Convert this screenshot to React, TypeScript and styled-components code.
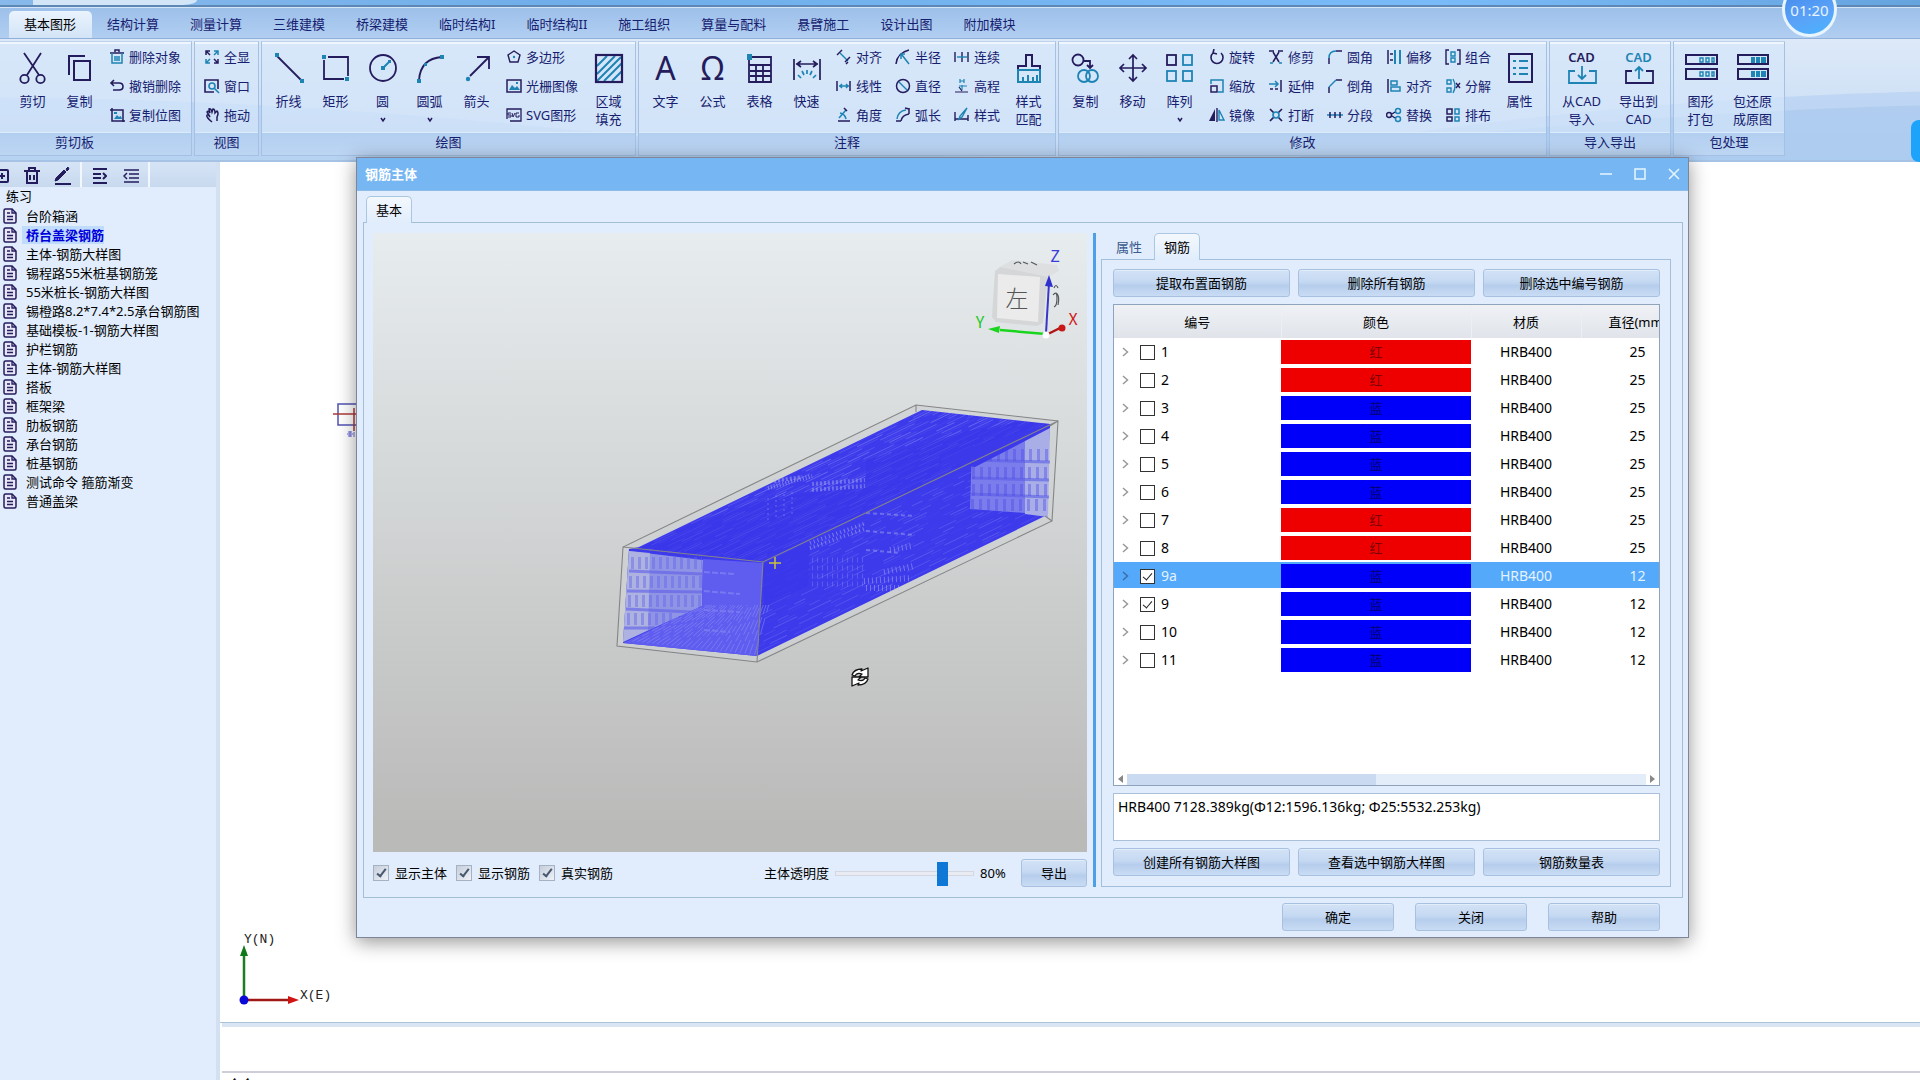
import React, { useState } from "react";
import styled, { createGlobalStyle, css } from "styled-components";

const NAVY = "#241c5c";
const TEAL = "#1d84b4";
const INK = "#16206e";
const SANS = `"Noto Sans", "Noto Sans CJK SC", sans-serif`;

const GlobalStyle = createGlobalStyle`
  *, *::before, *::after { box-sizing: border-box; }
  html, body { margin: 0; height: 100%; }
  body { font-family: ${SANS}; font-size: 13px; line-height: 18px; color: #000; overflow: hidden; }
  #root { height: 100%; }
  button, input, textarea { font: inherit; color: inherit; }
`;

/* ---------- icons ---------- */

const n = { stroke: NAVY, fill: "none" };
const t = { stroke: TEAL, fill: "none" };

const bigIcons: Record<string, React.ReactNode> = {
  cut: (
    <g strokeWidth="1.8">
      <path {...n} d="M5 -1 20 21M22 -1 8 21" />
      <circle {...n} cx="5.5" cy="25" r="4.2" />
      <circle {...n} cx="21.5" cy="25" r="4.2" />
    </g>
  ),
  copy: (
    <g strokeWidth="2">
      <path {...n} d="M3 21V2H19" />
      <rect {...n} x="8" y="7" width="16" height="19" />
    </g>
  ),
  line: (
    <g strokeWidth="1.8">
      <path {...n} d="M2 2 26 26" />
      <path fill={TEAL} d="M0 -1h4v4H0zM25 25h4v4h-4z" />
    </g>
  ),
  rect: (
    <g strokeWidth="1.8">
      <path {...n} d="M6 3H26V22M2 6V25H22" />
      <path fill={TEAL} d="M0 1h4v4H0zM23 23h4v4h-4z" />
    </g>
  ),
  circle: (
    <g strokeWidth="1.8">
      <circle {...n} cx="14" cy="14" r="13" />
      <path {...t} d="M14 14 21 7" strokeWidth="2" />
      <path fill={TEAL} d="M12 12h4v4h-4zM19 6h3v3h-3z" />
    </g>
  ),
  arc: (
    <g strokeWidth="1.8">
      <path {...n} d="M3 26C4 12 12 4 26 3" />
      <path fill={TEAL} d="M1 25h4v4H1zM24 1h4v4h-4zM8 9h3v3H8z" />
    </g>
  ),
  arrow: (
    <g strokeWidth="1.8">
      <path {...n} d="M7 22 25 4M14 3H26V15" />
      <circle fill={TEAL} cx="5" cy="25" r="2.2" />
    </g>
  ),
  hatch: (
    <g strokeWidth="2">
      <path {...t} d="M2 12 12 2M2 20 20 2M2 27 26 3M9 27 27 9M17 27 27 17" />
      <rect {...n} x="1" y="1" width="26" height="27" strokeWidth="2.2" />
    </g>
  ),
  grid: (
    <g strokeWidth="1.8">
      <path {...n} d="M3 3H25V28H3ZM3 11H25M4 17H25M4 22H25M10 11V28M17 11V28" />
      <path fill={TEAL} d="M1 0h5v6H1z" />
    </g>
  ),
  quick: (
    <g strokeWidth="1.7">
      <path {...n} d="M1 5V26M27 5V26M3 10H25M8 7 4 10 8 13M20 7 24 10 20 13" />
      <path {...t} d="M14 16v4M9 17l2 4M19 17l-2 4M5 21l3 3M23 21l-3 3" />
    </g>
  ),
  brush: (
    <g strokeWidth="2">
      <path {...n} d="M3 16V12H11V1H17V12H25V16" />
      <path {...t} d="M3 16H25V28H3ZM8 28V23M13 28V21M18 28V23M22 28V21" />
    </g>
  ),
  duplicate: (
    <g strokeWidth="1.8">
      <circle {...n} cx="6" cy="6" r="5.5" />
      <path {...n} d="M12 7H18V13M15 11 18 14 21 11" />
      <circle {...t} cx="12" cy="22" r="6" />
      <circle {...t} cx="20" cy="22" r="6" />
    </g>
  ),
  move: (
    <path {...n} strokeWidth="1.7" d="M14 1V27M1 14H27M10 5 14 1 18 5M10 23 14 27 18 23M5 10 1 14 5 18M23 10 27 14 23 18" />
  ),
  array: (
    <g strokeWidth="1.8">
      <rect {...n} x="1" y="1" width="9" height="10" />
      <rect {...t} x="17" y="1" width="9" height="10" />
      <rect {...t} x="1" y="17" width="9" height="10" />
      <rect {...t} x="17" y="17" width="9" height="10" />
    </g>
  ),
  props: (
    <g strokeWidth="2">
      <rect {...n} x="3" y="0" width="23" height="28" />
      <path {...t} d="M7 7H10M13 7H22M7 14H10M13 14H22M7 20H10M13 20H22" />
    </g>
  ),
  cadIn: <path {...t} strokeWidth="1.8" d="M7 17H1V29H28V17H21M14 12V25M10 21 14 25 18 21" />,
  cadOut: (
    <g strokeWidth="1.8">
      <path {...n} d="M7 17H1V29H28V17H21" />
      <path {...t} d="M14 25V13M10 17 14 13 18 17" />
    </g>
  ),
  pack: (
    <g strokeWidth="2">
      <path {...n} d="M-1 1H30V10H-1ZM-1 15H30V25H-1Z" />
      <path {...t} strokeWidth="1.400" d="M13 4h3v4h-3zM19 4h3v4h-3zM25 4h2v4h-2zM13 18h3v4h-3zM19 18h3v4h-3zM25 18h2v4h-2z" />
    </g>
  ),
  unpack: (
    <g strokeWidth="2">
      <path {...n} d="M-1 1H29V10H-1ZM-1 15H29V25H-1Z" />
      <path fill={TEAL} d="M12 3h4v6h-4zM17 3h4v6h-4zM22 3h5v6h-5zM12 17h4v6h-4zM17 17h4v6h-4zM22 17h5v6h-5z" />
    </g>
  ),
};

const smallIcons: Record<string, React.ReactNode> = {
  trash: (
    <g strokeWidth="1.5">
      <path {...n} d="M1 4H15M6 3V1H10V3" />
      <path {...t} d="M3 4V14H13V4M6 7V12M8 7V12M10 7V12" />
    </g>
  ),
  undo: <path {...n} strokeWidth="1.6" d="M5 2 2 5 5 8M2 5H10Q14 5 14 8.500T10 12H4" />,
  bitmap: (
    <g strokeWidth="1.5">
      <path {...n} d="M1 3H14V15M3 1V14H16" />
      <path fill={TEAL} d="M5 12 8 8l2 2 2-1 1 3zM5 5h3v2H5z" />
    </g>
  ),
  fit: (
    <g strokeWidth="1.5">
      <path {...n} d="M2 6V2H6M2 2 6 6M14 10V14H10M14 14 10 10" />
      <path {...t} d="M10 2H14V6M14 2 10 6M6 14H2V10M2 14 6 10" />
    </g>
  ),
  window: (
    <g strokeWidth="1.6">
      <path {...n} d="M10 14H1V2H14V11" />
      <circle {...t} cx="8" cy="8" r="3" />
      <path {...t} d="M10 10 15 15" />
    </g>
  ),
  pan: <path {...n} strokeWidth="1.5" d="M8 15C4 12 2 9 3 8s2 1 3 2L3 5Q4 3 6 6L5 2Q7 1 8 5L9 2Q11 2 11 6L13 4Q15 6 13 10V14" />,
  polygon: (
    <g strokeWidth="1.4">
      <path {...n} d="M8 2 14 6 12 13H4L2 6Z" />
      <circle fill={TEAL} cx="8" cy="8" r="1.2" />
    </g>
  ),
  raster: (
    <g strokeWidth="1.5">
      <path {...n} d="M1 2H15V14H1Z" />
      <path fill={TEAL} d="M3 12 6 7l3 3 2-2 3 4zM10 4h2v2h-2z" />
    </g>
  ),
  svg: (
    <g strokeWidth="1.3">
      <path {...n} d="M1 12V2H15V14H4" />
      <path {...n} strokeWidth="1" d="M5 6H2v2h3v2H2M6 6l1 4 2-4M13 6h-3v4h3V8" />
    </g>
  ),
  align: (
    <g strokeWidth="1.5">
      <path {...n} d="M1 6 6 1" />
      <path {...t} d="M4 4 12 12" />
      <path {...n} d="M9 13 14 8M10 15 12 13" />
    </g>
  ),
  linear: (
    <g strokeWidth="1.5">
      <path {...n} d="M1 3V13M14 3V13" />
      <path {...t} d="M3 8H13M6 6 4 8 6 10M10 6 12 8 10 10" />
    </g>
  ),
  angle: (
    <g strokeWidth="1.5">
      <path {...t} d="M10 3 3 11M4 6Q9 7 10 12" />
      <path {...n} d="M8 1 11 4M2 14H14" />
    </g>
  ),
  radius: (
    <g strokeWidth="1.5">
      <path {...n} d="M1 15Q2 4 14 1" />
      <path {...t} d="M7 6 14 15M6 10V5H10" />
    </g>
  ),
  diameter: (
    <g strokeWidth="1.5">
      <circle {...n} cx="8" cy="8" r="6.500" />
      <path {...t} d="M4 4 12 12" />
    </g>
  ),
  arclen: (
    <g strokeWidth="1.5">
      <path {...n} d="M1 14H6M14 1V7M6 14Q7 8 14 7" />
      <path {...t} d="M2 12Q3 4 11 3" />
      <path {...n} d="M10 1 14 2" />
    </g>
  ),
  chain: (
    <g strokeWidth="1.4">
      <path {...n} d="M1 3V13M14 3V13M8 3V13" />
      <path {...t} d="M3 8H13" />
    </g>
  ),
  elev: (
    <g strokeWidth="1.2">
      <path {...t} d="M6 1V5M10 1V5M6 3H10M8 7V12M5 8H13" />
      <path {...n} d="M1 14H14M5 9 8 13" />
    </g>
  ),
  style: (
    <g strokeWidth="1.4">
      <path {...n} d="M1 5V14M1 12H14M14 8V14" />
      <path {...t} d="M13 1 6 9 5 12 8 10Z" />
    </g>
  ),
  rotate: <path {...n} strokeWidth="1.6" d="M4 4A6 6 0 1 0 12 4M5 0 4 4 8 5" />,
  scale: (
    <g strokeWidth="1.5">
      <path {...t} d="M2 6V2H14V14H9" />
      <rect {...n} x="2" y="8" width="6" height="6" />
    </g>
  ),
  mirror: (
    <g strokeWidth="1.4">
      <path fill={NAVY} d="M6 2V14H0Z" />
      <path {...t} d="M10 3V13H15Z" />
      <path {...n} d="M8 1V15" />
    </g>
  ),
  trim: (
    <g strokeWidth="1.5">
      <path {...n} d="M1 2H6M10 2H15M5 3 11 13M11 3 5 13" />
      <path {...t} d="M2 14H5M11 14H14" />
    </g>
  ),
  extend: (
    <g strokeWidth="1.5">
      <path {...t} d="M1 6H10M7 3 10 6 7 9" />
      <path {...n} d="M13 2V14" />
      <path {...n} d="M2 11H10" strokeDasharray="3 2" />
    </g>
  ),
  breakAt: (
    <g strokeWidth="1.7">
      <path {...n} d="M2 2 6 6M14 2 10 6M2 14 6 10M14 14 10 10" />
      <circle {...t} cx="8" cy="8" r="3" />
    </g>
  ),
  fillet: (
    <g strokeWidth="1.5">
      <path {...n} d="M2 15V9M9 2H15" />
      <path {...t} d="M2 9Q2 2 9 2" />
    </g>
  ),
  chamfer: (
    <g strokeWidth="1.5">
      <path {...n} d="M2 15V9M9 2H15" />
      <path {...t} d="M2 9 9 2" />
    </g>
  ),
  segment: (
    <g strokeWidth="1.5">
      <path {...t} d="M0 8H16" />
      <path {...n} d="M3 5V11M8 5V11M13 5V11" />
    </g>
  ),
  offset: (
    <g strokeWidth="1.5">
      <path {...n} d="M2 1V15M4 5H7M4 11H7" />
      <path {...t} d="M9 1V15M14 1V15" strokeWidth="2" />
    </g>
  ),
  alignObj: (
    <g strokeWidth="1.5">
      <path {...n} d="M2 1V15" />
      <path {...t} d="M5 3H11V7H5ZM5 9H14V13H5Z" />
    </g>
  ),
  replace: (
    <g strokeWidth="1.5">
      <circle {...n} cx="3" cy="8" r="2.5" />
      <circle {...t} cx="12" cy="4" r="2.5" />
      <circle {...t} cx="12" cy="12" r="2.5" />
      <path {...n} d="M6 7 9 5M6 9 9 11" />
    </g>
  ),
  group: (
    <g strokeWidth="1.4">
      <path {...n} d="M4 1H1V15H4M12 1H15V15H12" />
      <path {...t} d="M6 3H10V7H6ZM6 9H10V13H6Z" />
    </g>
  ),
  ungroup: (
    <g strokeWidth="1.4">
      <path {...t} d="M2 2H6V6H2ZM2 10H6V14H2Z" />
      <path {...t} d="M8 1Q12 8 8 15" />
      <path {...n} d="M11 5 15 10M15 5 11 10" />
    </g>
  ),
  arrange: (
    <g strokeWidth="1.5">
      <path {...n} d="M2 2H7V7H2ZM2 10H7V14H2Z" />
      <path {...t} d="M10 2H14V7H10ZM10 10H14V14H10Z" />
    </g>
  ),
};

const SmallIcon = ({ name }: { name: string }) => (
  <svg width="16" height="16" viewBox="0 0 16 16" aria-hidden="true">{smallIcons[name]}</svg>
);

/* ---------- application frame ---------- */

const Shell = styled.div`
  position: relative;
  display: flex;
  flex-direction: column;
  height: 100vh;
  min-height: 960px;
  overflow: hidden;
  background: #fff;
`;

const TitleStrip = styled.div`
  height: 7px;
  flex: none;
  padding-left: 33px;
  background: linear-gradient(90deg, #88b9ea, #6faeea 30%, #79baf8 75%, #66a4de);
  border-bottom: 2px solid #5d87b4;
`;

const QuickAccess = styled.div`
  width: 164px;
  height: 5px;
  background: #d3e6f8;
  border-bottom-right-radius: 14px 5px;
`;

const TabBar = styled.nav`
  display: flex;
  align-items: flex-end;
  flex: none;
  height: 31px;
  padding-left: 9px;
  background: linear-gradient(#9dc0ea, #b1cef1);
  border-top: 1px solid #d5e5f8;
`;

const RibbonTab = styled.button<{ $active?: boolean }>`
  height: 27px;
  padding: 0 16px 2px 15px;
  border: 0;
  border-radius: 5px 5px 0 0;
  background: ${(p) => (p.$active ? "linear-gradient(#e9f3fd, #d3e4f7)" : "transparent")};
  color: ${(p) => (p.$active ? "#000" : INK)};
  white-space: nowrap;
`;

const Ribbon = styled.header`
  position: relative;
  display: flex;
  gap: 2px;
  flex: none;
  height: 124px;
  padding: 2px 0 4px;
  background: linear-gradient(#dde9f8, #c4daf5);
  border-top: 1px solid #8fb0d8;
  border-bottom: 2px solid #a6c3e6;
`;

const Swoosh = styled.svg`
  position: absolute;
  inset: 0;
  width: 100%;
  height: 100%;
`;

const RibbonGroup = styled.section<{ $first?: boolean }>`
  position: relative;
  display: flex;
  flex-direction: column;
  flex: none;
  border: 1px solid #a4c1e4;
  border-top-color: #bcd2ec;
  border-left-width: ${(p) => (p.$first ? 0 : 1)}px;
  background: rgba(213, 230, 250, 0.65);
  box-shadow: inset 0 2px 0 rgba(245, 250, 255, 0.8);
`;

const GroupBody = styled.div<{ $first?: boolean }>`
  display: flex;
  flex: 1;
  padding: 0 3px 0 ${(p) => (p.$first ? 9 : 3)}px;
`;

const GroupLabel = styled.div<{ $first?: boolean }>`
  height: 23px;
  padding-right: ${(p) => (p.$first ? 42 : 0)}px;
  line-height: 18px;
  text-align: center;
  color: ${INK};
  background: linear-gradient(#b3cff0, #bcd5f3);
  border-top: 1px solid #dcebfb;
`;

const BigButton = styled.button<{ $wide?: boolean }>`
  display: flex;
  flex-direction: column;
  align-items: center;
  width: ${(p) => (p.$wide ? 57 : 47)}px;
  padding: 11px 0 0;
  border: 0;
  background: none;
  color: ${INK};
  line-height: 18px;
  white-space: nowrap;
`;

const BigGlyph = styled.span`
  position: relative;
  display: flex;
  align-items: center;
  justify-content: center;
  height: 30px;
  margin-bottom: 9px;
  svg { display: block; overflow: visible; }
`;

const LetterGlyph = styled.span`
  font-family: "Noto Sans", sans-serif;
  font-size: 32px;
  line-height: 30px;
  color: ${NAVY};
`;

const CadLabel = styled.span<{ $teal?: boolean }>`
  position: absolute;
  top: -4px;
  left: 50%;
  transform: translateX(-50%);
  font-size: 13px;
  font-weight: 600;
  line-height: 16px;
  color: ${(p) => (p.$teal ? TEAL : NAVY)};
`;

const SmallGrid = styled.div<{ $col: number }>`
  display: grid;
  grid-auto-flow: column;
  grid-template-rows: repeat(3, 29px);
  grid-auto-columns: ${(p) => p.$col}px;
  column-gap: 2px;
`;

const SmallButton = styled.button`
  display: flex;
  align-items: center;
  gap: 4px;
  padding: 0 0 0 6px;
  border: 0;
  background: none;
  color: ${INK};
  white-space: nowrap;
  svg { flex: none; }
`;

type BigDef = { icon: string; lines: string[]; drop?: boolean; wide?: boolean };
type Part = { big: BigDef } | { small: [string, string][]; col: number };

const big = (icon: string, ...lines: string[]): Part => ({ big: { icon, lines } });
const dropBig = (icon: string, label: string): Part => ({ big: { icon, lines: [label], drop: true } });
const wideBig = (icon: string, ...lines: string[]): Part => ({ big: { icon, lines, wide: true } });

const groups: { label: string; parts: Part[] }[] = [
  {
    label: "剪切板",
    parts: [big("cut", "剪切"), big("copy", "复制"), { col: 85, small: [["trash", "删除对象"], ["undo", "撤销删除"], ["bitmap", "复制位图"]] }],
  },
  { label: "视图", parts: [{ col: 57, small: [["fit", "全显"], ["window", "窗口"], ["pan", "拖动"]] }] },
  {
    label: "绘图",
    parts: [
      big("line", "折线"), big("rect", "矩形"), dropBig("circle", "圆"), dropBig("arc", "圆弧"), big("arrow", "箭头"),
      { col: 85, small: [["polygon", "多边形"], ["raster", "光栅图像"], ["svg", "SVG图形"]] },
      big("hatch", "区域", "填充"),
    ],
  },
  {
    label: "注释",
    parts: [
      big("A", "文字"), big("Ω", "公式"), big("grid", "表格"), big("quick", "快速"),
      {
        col: 57,
        small: [
          ["align", "对齐"], ["linear", "线性"], ["angle", "角度"],
          ["radius", "半径"], ["diameter", "直径"], ["arclen", "弧长"],
          ["chain", "连续"], ["elev", "高程"], ["style", "样式"],
        ],
      },
      big("brush", "样式", "匹配"),
    ],
  },
  {
    label: "修改",
    parts: [
      big("duplicate", "复制"), big("move", "移动"), dropBig("array", "阵列"),
      {
        col: 57,
        small: [
          ["rotate", "旋转"], ["scale", "缩放"], ["mirror", "镜像"],
          ["trim", "修剪"], ["extend", "延伸"], ["breakAt", "打断"],
          ["fillet", "圆角"], ["chamfer", "倒角"], ["segment", "分段"],
          ["offset", "偏移"], ["alignObj", "对齐"], ["replace", "替换"],
          ["group", "组合"], ["ungroup", "分解"], ["arrange", "排布"],
        ],
      },
      big("props", "属性"),
    ],
  },
  { label: "导入导出", parts: [wideBig("cadIn", "从CAD", "导入"), wideBig("cadOut", "导出到", "CAD")] },
  { label: "包处理", parts: [big("pack", "图形", "打包"), wideBig("unpack", "包还原", "成原图")] },
];

const RibbonBig = ({ def }: { def: BigDef }) => (
  <BigButton $wide={def.wide}>
    <BigGlyph>
      {def.icon.startsWith("cad") && <CadLabel $teal={def.icon === "cadOut"}>CAD</CadLabel>}
      {bigIcons[def.icon] ? (
        <svg width="28" height="28" viewBox="0 0 28 28" aria-hidden="true">{bigIcons[def.icon]}</svg>
      ) : (
        <LetterGlyph>{def.icon}</LetterGlyph>
      )}
    </BigGlyph>
    {def.lines.map((l) => <span key={l}>{l}</span>)}
    {def.drop && (
      <svg width="6" height="18" viewBox="0 0 6 18" aria-hidden="true">
        <path d="M1 8 3 11 5 8" fill="none" stroke={NAVY} strokeWidth="1.500" />
      </svg>
    )}
  </BigButton>
);

/* ---------- workspace ---------- */

const Workspace = styled.div`
  display: flex;
  flex: 1;
  min-height: 0;
`;

const SidePanel = styled.aside`
  width: 220px;
  flex: none;
  background: #e1edfc;
  border-right: 4px solid #d3e0f2;
`;

const SideTools = styled.div`
  display: flex;
  align-items: center;
  height: 25px;
  background: linear-gradient(#d6e4f6, #c8d9ee);
`;

const ToolButton = styled.button<{ $clipped?: boolean }>`
  display: flex;
  align-items: center;
  justify-content: ${(p) => (p.$clipped ? "flex-start" : "center")};
  width: ${(p) => (p.$clipped ? 16 : 31)}px;
  height: 25px;
  padding: 3px 0 0;
  border: 0;
  background: none;
`;

const ToolSeparator = styled.span`
  width: 2px;
  height: 25px;
  margin: 0 2px;
  background: #f2f7fd;
`;

const Tree = styled.ul`
  margin: 0;
  padding: 0;
  list-style: none;
`;

const TreeRoot = styled.li`
  height: 19px;
  padding-left: 6px;
  line-height: 18px;
`;

const TreeItem = styled.li<{ $current?: boolean }>`
  display: flex;
  align-items: center;
  height: 19px;
  padding-left: 3px;
  span {
    margin-left: 5px;
    padding: 0 0 0 4px;
    line-height: 18px;
    ${(p) => p.$current && css`
      font-weight: 700;
      color: #0000dc;
      background: #c0dcfb;
    `}
  }
`;

const treeItems = [
  "台阶箱涵", "桥台盖梁钢筋", "主体-钢筋大样图", "锡程路55米桩基钢筋笼", "55米桩长-钢筋大样图",
  "锡橙路8.2*7.4*2.5承台钢筋图", "基础模板-1-钢筋大样图", "护栏钢筋", "主体-钢筋大样图", "搭板",
  "框架梁", "肋板钢筋", "承台钢筋", "桩基钢筋", "测试命令 箍筋渐变", "普通盖梁",
];

const DocIcon = () => (
  <svg width="14" height="16" viewBox="0 0 14 16" aria-hidden="true">
    <path d="M1 2.500Q1 1 2.500 1H9L13 5V13.500Q13 15 11.500 15H2.500Q1 15 1 13.500Z" fill="#e6e6f6" stroke={NAVY} strokeWidth="1.500" />
    <path d="M9 1V5H13M4 5H7M4 8.500H10M4 11.500H10" fill="none" stroke={NAVY} strokeWidth="1.300" />
  </svg>
);

const Drafting = styled.main`
  display: flex;
  flex-direction: column;
  flex: 1;
  min-width: 0;
`;

const Canvas = styled.div`
  display: flex;
  flex-direction: column;
  justify-content: space-between;
  flex: 1;
  padding: 237px 0 8px 14px;
  border-bottom: 1px solid #a9c3d8;
  svg { display: block; }
`;

const CommandLog = styled.div`
  height: 50px;
  margin-left: 2px;
  border-top: 4px solid #d9e5f2;
  border-bottom: 2px solid #cdced8;
`;

const CommandLine = styled.label`
  height: 7px;
  padding: 2px 0 0 8px;
  overflow: hidden;
`;

/* ---------- dialog ---------- */

const Dialog = styled.section`
  position: absolute;
  top: 157px;
  left: 356px;
  display: flex;
  flex-direction: column;
  width: 1333px;
  height: 781px;
  background: #e1edfc;
  border: 1px solid #7f8499;
  box-shadow: 0 4px 18px rgba(0, 0, 0, 0.42);
`;

const DialogTitle = styled.header`
  display: flex;
  align-items: center;
  justify-content: space-between;
  height: 33px;
  flex: none;
  padding: 0 4px 0 8px;
  background: #76b6f3;
  color: #fff;
  font-weight: 700;
  border-bottom: 1px solid #8dbce8;
  div { display: flex; }
  button {
    display: flex;
    align-items: center;
    justify-content: center;
    width: 20px;
    height: 24px;
    margin-left: 14px;
    padding: 0;
    border: 0;
    background: none;
  }
`;

const TabRow = styled.div<{ $outer?: boolean }>`
  display: flex;
  flex: none;
  height: ${(p) => (p.$outer ? 31 : 26)}px;
  padding: ${(p) => (p.$outer ? "5px 0 0 9px" : "0 0 0 3px")};
`;

const PageTab = styled.button<{ $active?: boolean }>`
  position: relative;
  height: 27px;
  padding: 0 ${(p) => (p.$active ? 9 : 11)}px 1px;
  border: 1px solid ${(p) => (p.$active ? "#a9c6e3" : "transparent")};
  border-bottom: 0;
  border-radius: 5px 5px 0 0;
  background: ${(p) => (p.$active ? "linear-gradient(#f4f8fd, #e1edfc)" : "none")};
  color: ${(p) => (p.$active ? "#000" : "#3c5a8c")};
`;

const Page = styled.div`
  display: flex;
  flex: 1;
  min-height: 0;
  margin: 0 5px 0 6px;
  padding: 10px 11px 10px 9px;
  border: 1px solid #a3bfd8;
`;

const Viewer = styled.div`
  display: flex;
  flex-direction: column;
  flex: 1;
  min-width: 0;
`;

const Scene = styled.svg`
  display: block;
  width: 100%;
  flex: 1;
  min-height: 0;
  background: linear-gradient(#e7ecee, #babab9 96%);
`;

const ViewerBar = styled.div`
  display: flex;
  align-items: center;
  height: 28px;
  margin-top: 7px;
`;

const CheckLabel = styled.label`
  display: flex;
  align-items: center;
  gap: 6px;
  margin-right: 9px;
`;

const GlossyCheck = styled.input`
  appearance: none;
  display: grid;
  place-items: center;
  width: 16px;
  height: 16px;
  margin: 0;
  background: linear-gradient(135deg, #c6cedb, #eef2f8);
  border: 1px solid #a5b2c4;
  &:checked::before {
    content: "";
    width: 5px;
    height: 10px;
    margin-top: -2px;
    border: solid #47586f;
    border-width: 0 2px 2px 0;
    transform: rotate(38deg);
  }
`;

const SliderLabel = styled.label`
  display: flex;
  align-items: center;
  gap: 6px;
  margin-left: auto;
`;

const Slider = styled.input`
  appearance: none;
  width: 139px;
  height: 24px;
  margin: 0;
  background: none;
  &::-webkit-slider-runnable-track {
    height: 5px;
    background: #e8ebf1;
    border: 1px solid #d4d7df;
  }
  &::-webkit-slider-thumb {
    appearance: none;
    width: 11px;
    height: 24px;
    margin-top: -10px;
    background: #0f78d6;
  }
`;

const Percent = styled.output`
  width: 41px;
`;

const GlossButton = styled.button<{ $w?: number }>`
  width: ${(p) => (p.$w ? `${p.$w}px` : "auto")};
  height: 28px;
  padding: 0;
  border: 1px solid #a8c1e0;
  border-radius: 3px;
  background: linear-gradient(#d3e2f6, #c5d9f2 45%, #b6cdec 60%, #c9dcf4);
  box-shadow: inset 0 1px 0 #e2edfa;
  white-space: nowrap;
`;

const Splitter = styled.div`
  width: 3px;
  flex: none;
  margin: 0 5px 0 6px;
  background: #4f9fe8;
`;

const Inspector = styled.div`
  display: flex;
  flex-direction: column;
  flex: 0 0 570px;
  min-width: 0;
`;

const InspectorPage = styled.div`
  display: flex;
  flex-direction: column;
  gap: 7px;
  flex: 1;
  min-width: 0;
  min-height: 0;
  padding: 9px 10px 10px 11px;
  border: 1px solid #a3bfdc;
`;

const ButtonRow = styled.div`
  display: grid;
  grid-template-columns: repeat(3, 1fr);
  gap: 8px;
`;

const TableBox = styled.div`
  display: flex;
  flex-direction: column;
  justify-content: space-between;
  flex: 1;
  min-width: 0;
  min-height: 0;
  overflow: hidden;
  background: #fff;
  border: 1px solid #8ea4bd;
`;

const TableClip = styled.div`
  overflow: hidden;
`;

const RebarTable = styled.table`
  width: 580px;
  table-layout: fixed;
  border-collapse: collapse;
  th, td { padding: 0; }
  th {
    height: 33px;
    font-weight: 400;
    text-align: center;
    background: linear-gradient(#eff1f5, #e0e4ea);
    border-right: 1px solid #eceff3;
  }
  td { height: 28px; font-size: 14px; text-align: center; }
`;

const BodyRow = styled.tr<{ $selected?: boolean }>`
  ${(p) => p.$selected && css`
    color: #e4f2ff;
    td { background: linear-gradient(#55a9fb 26px, #fff 26px); }
  `}
`;

const RowHead = styled.label`
  display: flex;
  align-items: center;
  padding-left: 8px;
  svg { margin-right: 11px; }
`;

const FlatCheck = styled.input`
  appearance: none;
  display: grid;
  place-items: center;
  width: 15px;
  height: 15px;
  margin: 0 6px 0 0;
  background: #fff;
  border: 1px solid #333;
  &:checked::before {
    content: "";
    width: 5px;
    height: 9px;
    margin-top: -2px;
    border: solid #222;
    border-width: 0 1px 1px 0;
    transform: rotate(40deg);
  }
`;

const Swatch = styled.div<{ $red: boolean }>`
  height: 24px;
  line-height: 24px;
  font-size: 13px;
  color: ${(p) => (p.$red ? "#7a0000" : "#00006a")};
  background: ${(p) => (p.$red ? "#ee0000" : "#0000fa")};
`;

const ScrollBar = styled.div`
  display: flex;
  align-items: center;
  height: 12px;
  padding: 0 4px;
  div { flex: 1; height: 11px; margin: 0 4px; background: #e3edf9; }
  span { display: block; width: 48%; height: 11px; background: #cadaf0; }
`;

const Summary = styled.textarea`
  display: block;
  height: 48px;
  padding: 4px;
  font-size: 14px;
  border: 1px solid #a9bfda;
  background: #fff;
  resize: none;
  outline: none;
`;

const DialogFooter = styled.footer`
  display: flex;
  justify-content: flex-end;
  gap: 21px;
  flex: none;
  padding: 5px 28px 6px;
`;

const Timer = styled.div`
  position: absolute;
  top: -18px;
  right: 83px;
  width: 55px;
  height: 55px;
  border: 3px solid #e8f5ff;
  border-radius: 50%;
  background: linear-gradient(160deg, #3f86e8, #5aa2f8 60%, #4bb4ff);
  color: #e8f4ff;
  font-size: 15px;
  line-height: 51px;
  text-align: center;
`;

const SideHandle = styled.button`
  position: absolute;
  top: 120px;
  right: 0;
  width: 9px;
  height: 42px;
  padding: 0;
  border: 0;
  border-radius: 8px 0 0 8px;
  background: #1ea3fa;
`;

/* ---------- 3D scene ---------- */

type Pt = [number, number];
const mix = (a: Pt, b: Pt, k: number): Pt => [a[0] + (b[0] - a[0]) * k, a[1] + (b[1] - a[1]) * k];
const seg = (a: Pt, b: Pt) => `M${a[0].toFixed(1)} ${a[1].toFixed(1)}L${b[0].toFixed(1)} ${b[1].toFixed(1)}`;
const rows = (a: Pt, b: Pt, c: Pt, d: Pt, count: number) =>
  Array.from({ length: count }, (_, i) => {
    const k = (i + 0.5) / count;
    return seg(mix(a, c, k), mix(b, d, k));
  });

const topBars = rows([632, 549], [922, 410], [763, 561], [1050, 425], 34);
const sideBars = rows([763, 568], [1050, 430], [757, 654], [1045, 514], 30);
const floorBars = rows([630, 641], [700, 605], [757, 655], [770, 605], 26);

const Model = () => (
  <Scene viewBox="373 233 714 619" preserveAspectRatio="xMidYMid meet" role="img">
    <polygon points="916,405 1058,421 1052,521 757,662 617,646 623,547" fill="#cfd2d3" fillOpacity="0.7" />
    <polygon points="922,410 1050,424 1045,516 757,656 623,643 629,549 639,547" fill="#3d3aec" />
    <g fill="none" stroke="#8f93ee" strokeWidth="1">
      {topBars.map((d, i) => (
        <path key={i} d={d} opacity={0.1 + ((i * 7) % 5) * 0.1} strokeDasharray={`${18 + ((i * 5) % 29)} ${7 + ((i * 11) % 31)}`} strokeDashoffset={i * 23} />
      ))}
      {sideBars.map((d, i) => (
        <path key={i} d={d} opacity={0.06 + ((i * 3) % 5) * 0.07} strokeDasharray={`${12 + ((i * 7) % 21)} ${9 + ((i * 13) % 37)}`} strokeDashoffset={i * 29} />
      ))}
    </g>
    <polygon points="640,548 700,520 763,500 866,484 866,460 972,430 1020,422 1050,424 972,462 763,562" fill="#3936ea" fillOpacity="0.6" />
    <polygon points="763,564 810,542 808,586 764,606" fill="#3936ea" fillOpacity="0.8" />
    <g fill="none" stroke="#b7bbee" strokeWidth="4">
      <path d="M768 488 812 476" strokeDasharray="1 2" opacity="0.5" />
      <path d="M774 481 802 477" strokeDasharray="2 2" opacity="0.45" />
      <path d="M812 484 865 480M812 490 865 486" strokeDasharray="2 2" opacity="0.4" />
      <path d="M768 498V522M776 495V520M784 494V516M792 492V514" strokeWidth="1" strokeDasharray="2 3" opacity="0.4" />
      <path d="M810 543 864 524M810 548 864 529" strokeDasharray="1 3" opacity="0.5" />
      <path d="M866 513 915 516M866 531 915 535M866 550 900 553" strokeWidth="2" strokeDasharray="4 3" opacity="0.4" />
      <path d="M812 560H864M812 568H866M812 576H866M812 584H866" strokeWidth="5" strokeDasharray="1 4" opacity="0.25" />
      <path d="M866 588H900M864 581 912 578M890 550 912 546M884 572 914 566" strokeWidth="6" strokeDasharray="1 3" opacity="0.45" />
    </g>
    <polygon points="972,446 1025,434 1025,513 970,509" fill="#7b7dec" />
    <polygon points="1025,434 1050,427 1048,517 1025,514" fill="#a9aee6" />
    <path d="M972 460 1050 462M972 478 1049 480M971 494 1049 497" stroke="#5a5be6" strokeWidth="3" fill="none" opacity="0.6" />
    <path d="M973 455H1048M972 473H1048M972 490H1048M971 505H1048" stroke="#4b4ae6" strokeWidth="12" strokeDasharray="3 5" fill="none" opacity="0.4" />
    <polygon points="940,462 972,446 1050,424 1050,428 975,467" fill="#3c39ea" />
    <polygon points="629,551 703,560 702,606 623,642" fill="#9094e4" />
    <polygon points="629,551 650,553 648,630 623,642" fill="#b4b9e0" fillOpacity="0.8" />
    <path d="M629 571 702 574M627 591 702 592M626 609 692 612M624 628 655 628" stroke="#5d5eea" strokeWidth="3" fill="none" opacity="0.6" />
    <path d="M631 563H702M629 582H702M628 601H702M627 619H672" stroke="#6465ec" strokeWidth="12" strokeDasharray="3 4" fill="none" opacity="0.45" />
    <polygon points="703,559 763,563 757,656 623,643 702,606" fill="#5f5df0" />
    <g fill="none" stroke="#8d8ff2" strokeWidth="1" opacity="0.55">
      {floorBars.map((d, i) => <path key={i} d={d} strokeDasharray={`${8 + ((i * 5) % 9)} ${3 + ((i * 3) % 6)}`} />)}
      <path d="M704 572 735 574M704 591 740 594M704 610 740 612M704 630 730 632" strokeWidth="2" strokeDasharray="6 2" />
    </g>
    <g fill="none" stroke="#858588" strokeWidth="1.1">
      <path d="M916 405 1058 421 1052 521 757 662 617 646 623 547Z" />
      <path d="M623 547 763 562 1058 421M763 562 757 662M916 405V412M1058 421 1050 426M1052 521 1045 516" />
    </g>
    <path d="M775 557V569M769 563H781" stroke="#c9c33a" strokeWidth="1.500" />

    <polygon points="995,271 1000,267 1044,271 1048,275 1043,323 1037,326 996,322 992,317" fill="#d4d6d7" />
    <polygon points="1000,267 1012,260 1057,265 1059,271 1048,277" fill="#dddfe0" />
    <polygon points="998,274 1040,277 1038,322 997,318" fill="#ebebeb" />
    <text x="1017" y="307" textAnchor="middle" fontFamily='"Noto Sans CJK SC", sans-serif' fontWeight="300" fontSize="23" fill="#555">左</text>
    <path d="M1014 264q5-4 7 0M1023 262l5 2M1031 262l6 3M1054 288q2-5 4 0M1053 295q4-5 4 3t-3 9M1056 293q4 2 2 12" fill="none" stroke="#55585c" strokeWidth="1.200" />
    <path d="M1046 333 1049 283" stroke="#3835c8" strokeWidth="2" />
    <path d="M1049 275 1053 287 1045 286Z" fill="#3030cf" />
    <path d="M1046 334 1000 330" stroke="#19d51e" strokeWidth="2.500" />
    <path d="M988 329 1000 326 999 333Z" fill="#19d51e" />
    <path d="M1048 334 1060 328" stroke="#b01616" strokeWidth="2.500" />
    <circle cx="1062" cy="328" r="3.500" fill="#c81818" />
    <circle cx="1046" cy="335" r="3.500" fill="#fff" />
    <g fontFamily='"Noto Sans CJK SC", sans-serif' fontSize="16" textAnchor="middle">
      <text x="1055" y="262" fill="#3c3cd8">Z</text>
      <text x="980" y="328" fill="#19c81e">Y</text>
      <text x="1073" y="325" fill="#d02020">X</text>
    </g>
    <g fill="#fff" stroke="#111" strokeWidth="1.300" strokeLinejoin="round">
      <path d="M852 675Q854 669 862 669L861 671 868 668V677H859L862 674Q857 672 855 676Z" />
      <path d="M868 679Q866 685 858 685L859 683 852 686V677H861L858 680Q863 682 865 678Z" />
    </g>
  </Scene>
);

/* ---------- data ---------- */

const tabs = ["基本图形", "结构计算", "测量计算", "三维建模", "桥梁建模", "临时结构I", "临时结构II", "施工组织", "算量与配料", "悬臂施工", "设计出图", "附加模块"];

const rebar: [string, boolean, number][] = [
  ["1", true, 25], ["2", true, 25], ["3", false, 25], ["4", false, 25], ["5", false, 25], ["6", false, 25],
  ["7", true, 25], ["8", true, 25], ["9a", false, 12], ["9", false, 12], ["10", false, 12], ["11", false, 12],
];

export default function App() {
  const [opacity, setOpacity] = useState(80);
  const [checked, setChecked] = useState<string[]>(["9a", "9"]);
  const toggle = (id: string) =>
    setChecked((list) => (list.includes(id) ? list.filter((x) => x !== id) : [...list, id]));

  return (
    <>
      <GlobalStyle />
      <Shell>
        <TitleStrip><QuickAccess /></TitleStrip>
        <TabBar>
          {tabs.map((name, i) => <RibbonTab key={name} $active={i === 0}>{name}</RibbonTab>)}
        </TabBar>
        <Ribbon>
          <Swoosh viewBox="0 0 1920 120" preserveAspectRatio="none" aria-hidden="true">
            <path d="M0 58Q300 60 620 95T1300 110Q1600 60 1920 52V120H0Z" fill="#a9c9f0" fillOpacity="0.45" />
            <path d="M1300 110Q1700 70 1920 66V120H1300Z" fill="#9fc3ee" fillOpacity="0.45" />
          </Swoosh>
          {groups.map((g, gi) => (
            <RibbonGroup key={g.label} $first={gi === 0}>
              <GroupBody $first={gi === 0}>
                {g.parts.map((p, i) =>
                  "big" in p ? (
                    <RibbonBig key={i} def={p.big} />
                  ) : (
                    <SmallGrid key={i} $col={p.col}>
                      {p.small.map(([icon, text]) => (
                        <SmallButton key={icon}><SmallIcon name={icon} />{text}</SmallButton>
                      ))}
                    </SmallGrid>
                  )
                )}
              </GroupBody>
              <GroupLabel $first={gi === 0}>{g.label}</GroupLabel>
            </RibbonGroup>
          ))}
        </Ribbon>

        <Workspace>
          <SidePanel>
            <SideTools>
              <ToolButton $clipped aria-label="新建">
                <svg width="10" height="18" viewBox="0 0 10 18"><path d="M0 3H7Q8 3 8 4V14Q8 15 7 15H0M0 9H5M2 6V12" fill="none" stroke={NAVY} strokeWidth="2" /></svg>
              </ToolButton>
              <ToolButton aria-label="删除">
                <svg width="16" height="18" viewBox="0 0 16 18"><path d="M0 4H16M5 4V1H11V4M3 4V16H13V4M6 8V13M10 8V13" fill="none" stroke={NAVY} strokeWidth="2" /></svg>
              </ToolButton>
              <ToolButton aria-label="重命名">
                <svg width="18" height="18" viewBox="0 0 18 18"><path d="M1 17H17" stroke={NAVY} strokeWidth="2" /><path d="M1 14 2 11 10 3 12 5 4 13ZM12 2 14 0 15 2 13 4Z" fill={NAVY} stroke={NAVY} /></svg>
              </ToolButton>
              <ToolSeparator />
              <ToolButton aria-label="展开">
                <svg width="14" height="16" viewBox="0 0 14 16"><path d="M0 1H14M0 6H8M0 10H8M0 15H14M10 5 13 8 10 11" fill="none" stroke={NAVY} strokeWidth="2" /></svg>
              </ToolButton>
              <ToolButton aria-label="折叠">
                <svg width="16" height="14" viewBox="0 0 16 14"><path d="M1 1H16M6 5H16M6 9H16M1 13H16M4 4 1 7 4 10" fill="none" stroke={NAVY} strokeWidth="1.500" /></svg>
              </ToolButton>
              <ToolSeparator />
            </SideTools>
            <Tree>
              <TreeRoot>练习</TreeRoot>
              {treeItems.map((name, i) => (
                <TreeItem key={i} $current={i === 1}><DocIcon /><span>{name}</span></TreeItem>
              ))}
            </Tree>
          </SidePanel>
          <Drafting>
            <Canvas>
              <svg width="140" height="50" viewBox="234 399 140 50" aria-hidden="true">
                <path d="M370 404H338V425H370" fill="none" stroke="#5353b5" strokeWidth="1.500" />
                <path d="M333 414H370M354 408V431" fill="none" stroke="#b03a3a" strokeWidth="1.500" />
                <path d="M348 432H352M347 434H353M348 436H352M350 431V437M354 432V437" fill="none" stroke="#6a6ad8" />
              </svg>
              <svg width="110" height="90" viewBox="234 924 110 90" aria-hidden="true">
                <path d="M244 1000V955" stroke="#1c7d22" strokeWidth="2.500" />
                <path d="M244 945 248 956H240Z" fill="#107a18" />
                <path d="M244 1000H288" stroke="#a01818" strokeWidth="2.500" />
                <path d="M299 1000 288 996V1004Z" fill="#d01414" />
                <circle cx="244" cy="1000" r="4.500" fill="#0a0ad8" />
                <g fontFamily='"Liberation Mono", monospace' fontSize="13" fill="#222">
                  <text x="244" y="943">Y(N)</text>
                  <text x="300" y="999">X(E)</text>
                </g>
              </svg>
            </Canvas>
            <CommandLog />
            <CommandLine>命令:</CommandLine>
          </Drafting>
        </Workspace>

        <Dialog aria-label="钢筋主体">
          <DialogTitle>
            钢筋主体
            <div>
              <button aria-label="最小化"><svg width="14" height="14"><path d="M1 7H13" stroke="#e6f6ff" strokeWidth="1.500" /></svg></button>
              <button aria-label="最大化"><svg width="14" height="14"><path d="M2 2H12V12H2Z" fill="none" stroke="#e6f6ff" strokeWidth="1.500" /></svg></button>
              <button aria-label="关闭窗口"><svg width="14" height="14"><path d="M2 2 12 12M12 2 2 12" stroke="#e6f6ff" strokeWidth="1.500" /></svg></button>
            </div>
          </DialogTitle>
          <TabRow $outer><PageTab $active>基本</PageTab></TabRow>
          <Page>
            <Viewer>
              <Model />
              <ViewerBar>
                <CheckLabel><GlossyCheck type="checkbox" defaultChecked />显示主体</CheckLabel>
                <CheckLabel><GlossyCheck type="checkbox" defaultChecked />显示钢筋</CheckLabel>
                <CheckLabel><GlossyCheck type="checkbox" defaultChecked />真实钢筋</CheckLabel>
                <SliderLabel>
                  主体透明度
                  <Slider type="range" min={0} max={100} value={opacity} onChange={(e) => setOpacity(Number(e.target.value))} />
                  <Percent>{opacity}%</Percent>
                </SliderLabel>
                <GlossButton $w={66}>导出</GlossButton>
              </ViewerBar>
            </Viewer>
            <Splitter />
            <Inspector>
              <TabRow>
                <PageTab>属性</PageTab>
                <PageTab $active>钢筋</PageTab>
              </TabRow>
              <InspectorPage>
                <ButtonRow>
                  <GlossButton>提取布置面钢筋</GlossButton>
                  <GlossButton>删除所有钢筋</GlossButton>
                  <GlossButton>删除选中编号钢筋</GlossButton>
                </ButtonRow>
                <TableBox>
                  <TableClip>
                    <RebarTable>
                      <colgroup><col width="167" /><col width="190" /><col width="110" /><col width="113" /></colgroup>
                      <thead>
                        <tr><th>编号</th><th>颜色</th><th>材质</th><th>直径(mm)</th></tr>
                      </thead>
                      <tbody>
                        {rebar.map(([id, red, size]) => (
                          <BodyRow key={id} $selected={id === "9a"}>
                            <td>
                              <RowHead>
                                <svg width="7" height="10" viewBox="0 0 7 10" aria-hidden="true"><path d="M1 1 5.500 5 1 9" fill="none" stroke={id === "9a" ? "#3a6ea8" : "#999"} strokeWidth="1.500" /></svg>
                                <FlatCheck type="checkbox" checked={checked.includes(id)} onChange={() => toggle(id)} />
                                {id}
                              </RowHead>
                            </td>
                            <td><Swatch $red={red}>{red ? "红" : "蓝"}</Swatch></td>
                            <td>HRB400</td>
                            <td>{size}</td>
                          </BodyRow>
                        ))}
                      </tbody>
                    </RebarTable>
                  </TableClip>
                  <ScrollBar>
                    <svg width="5" height="8" aria-hidden="true"><path d="M5 0V8L0 4Z" fill="#888" /></svg>
                    <div><span /></div>
                    <svg width="5" height="8" aria-hidden="true"><path d="M0 0V8L5 4Z" fill="#888" /></svg>
                  </ScrollBar>
                </TableBox>
                <Summary readOnly aria-label="钢筋汇总" defaultValue="HRB400 7128.389kg(Φ12:1596.136kg; Φ25:5532.253kg)" />
                <ButtonRow>
                  <GlossButton>创建所有钢筋大样图</GlossButton>
                  <GlossButton>查看选中钢筋大样图</GlossButton>
                  <GlossButton>钢筋数量表</GlossButton>
                </ButtonRow>
              </InspectorPage>
            </Inspector>
          </Page>
          <DialogFooter>
            <GlossButton $w={112}>确定</GlossButton>
            <GlossButton $w={112}>关闭</GlossButton>
            <GlossButton $w={112}>帮助</GlossButton>
          </DialogFooter>
        </Dialog>

        <Timer>01:20</Timer>
        <SideHandle aria-label="展开侧栏" />
      </Shell>
    </>
  );
}
